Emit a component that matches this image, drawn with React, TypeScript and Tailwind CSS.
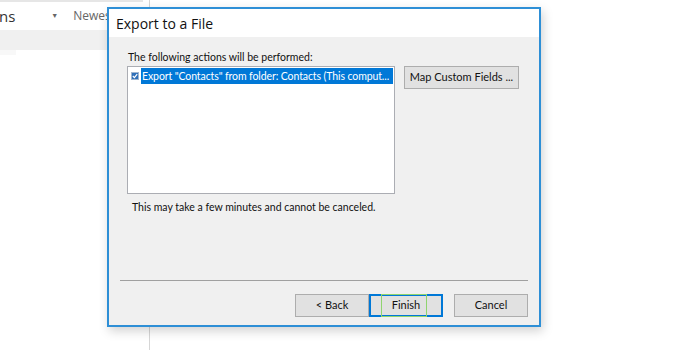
import React from 'react'

const Btn = ({ label, primary }: { label: string; primary?: boolean }) => (
  <button
    className={
      primary
        ? "relative w-[74px] h-[23px] bg-[#e1e1e1] border-2 border-[#0078d7] text-[11px] text-[#111]"
        : "w-[74px] h-[23px] bg-[#e1e1e1] border border-[#adadad] text-[11px] text-[#111]"
    }
  >
    {primary && <span className="absolute left-[10px] top-[-2px] w-[46px] h-[23px] border border-[#8fd46f]"></span>}
    {label}
  </button>
)

const App = () => {
  return (
    <div className="relative w-[675px] h-[350px] bg-white overflow-hidden font-['Lato',sans-serif]">
      {/* background app */}
      <div className="flex h-full">
        <div className="w-[150px] border-r border-[#d6d6d6] flex flex-col">
          <div className="h-[2px] w-[143px] bg-[#e6e6e6]"></div>
          <div className="flex items-center h-[28px] text-[15px] text-[#333] font-['Open_Sans',sans-serif]">
            <span className="ml-[-1px]">ns</span>
            <span className="ml-[36px] text-[7px] text-[#666]">▼</span>
            <span className="ml-[15px] text-[12px] text-[#666]">Newest</span>
          </div>
          <div className="h-[20px] bg-[#f0f0f0]"></div>
          <div className="h-[5px] w-[16px] bg-[#f8f8f8]"></div>
        </div>
        <div className="flex-1"></div>
      </div>

      {/* dialog window */}
      <div className="absolute left-[107px] top-[7px] w-[434px] h-[320px] border-2 border-[#2e8fd6] bg-[#f0f0f0] shadow-[2px_4px_10px_rgba(0,0,0,0.18)] flex flex-col">
        <div className="h-[28px] bg-white flex items-center pl-[7px] text-[14px] text-[#111] font-['Open_Sans',sans-serif]">
          Export to a File
        </div>
        <div className="flex-1 flex flex-col px-[11px] text-[10.5px] text-[#111]">
          <div className="pl-[8px] pt-[12px] leading-[16px]">
            The following actions will be performed:
          </div>
          <div className="flex pl-[7px] mt-[1px]">
            <div className="w-[268px] h-[128px] bg-white border border-[#abadb3] p-[1px]">
              <div className="flex items-center h-[16px]">
                <span className="w-[8px] h-[8px] ml-[2px] mr-[2px] bg-[#2f6fb8] border border-[#9fb5cf] flex items-center justify-center">
                  <svg width="6" height="6" viewBox="0 0 6 6"><path d="M0.8 3 L2.4 4.6 L5.2 1.2" stroke="white" strokeWidth="1.2" fill="none" /></svg>
                </span>
                <span className="flex-1 h-[16px] bg-[#0078d7] text-white leading-[16px] whitespace-nowrap tracking-[-0.1px] pl-[1px]">
                  Export "Contacts" from folder: Contacts (This comput...
                </span>
              </div>
            </div>
            <div className="ml-[9px]">
              <button className="w-[115px] h-[23px] bg-[#e1e1e1] border border-[#adadad] text-[11px] text-[#111] whitespace-nowrap">
                Map Custom Fields ...
              </button>
            </div>
          </div>
          <div className="pl-[12px] mt-[5px] leading-[16px]">
            This may take a few minutes and cannot be canceled.
          </div>
          <div className="flex-1"></div>
          <div className="h-px bg-[#a0a0a0] mb-[13px]"></div>
          <div className="flex justify-end gap-[11px] mb-[8px]">
            <div className="flex">
              <Btn label="< Back" />
              <Btn label="Finish" primary />
            </div>
            <Btn label="Cancel" />
          </div>
        </div>
      </div>
    </div>
  )
}

export default App
